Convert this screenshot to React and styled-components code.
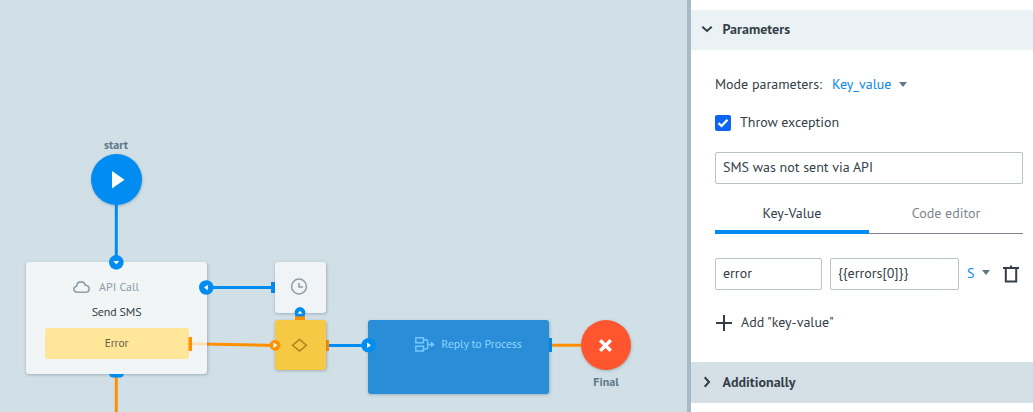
import React from "react";
import styled, { createGlobalStyle } from "styled-components";

const Global = createGlobalStyle`
  * { box-sizing: border-box; }
  body { margin: 0; overflow: hidden; font-family: "PT Sans", "Open Sans", "Noto Sans", sans-serif; font-stretch: 87%; color: #353e48; }
`;
const blue = "#008cf0";
const orange = "#ff9100";

const Layout = styled.div`display: flex; width: 1033px; height: 412px; overflow: hidden;`;
const Canvas = styled.main`position: relative; width: 687px; flex: none; background: #d1dfe6; overflow: hidden;`;
const Layer = styled.svg`position: absolute; inset: 0; pointer-events: none; display: block;`;
const Node = styled.div`
  position: absolute;
  left: ${p => p.$x}px;
  top: ${p => p.$y}px;
  width: ${p => p.$w}px;
  height: ${p => p.$h}px;
  background: ${p => p.$bg};
  border-radius: ${p => (p.$round ? "50%" : "3px")};
  box-shadow: 0.5px 1px 3px rgba(60, 85, 100, 0.32);
`;
const CardBody = styled.div`display: flex; flex-direction: column; align-items: center; padding: 15px 18px 0;`;
const CardTitle = styled.div`
  display: flex; align-items: center; height: 20px; gap: ${p => p.$gap}px;
  padding-left: ${p => p.$indent || 0}px; padding-right: ${p => p.$outdent || 0}px;
`;
const Label = styled.span`
  font-size: ${p => p.$size || 14}px;
  font-weight: ${p => p.$weight || 400};
  letter-spacing: ${p => p.$track || 0}px;
  color: ${p => p.$color || "inherit"};
  line-height: 20px;
  white-space: nowrap;
`;
const ErrorBar = styled.div`
  display: flex; align-items: center; justify-content: center;
  width: 144px; height: 31px; margin-top: 6px; padding-bottom: 1px; border-radius: 3px; background: #ffe699;
`;
const Caption = styled.div`
  position: absolute; left: ${p => p.$x}px; top: ${p => p.$y}px; width: 60px;
  display: flex; justify-content: center;
`;

const Panel = styled.aside`flex: 1; min-width: 0; border-left: 4px solid #a8bac5; background: #fff; padding-top: 10px;`;
const SectionHeader = styled.header`
  display: flex; align-items: center; gap: 9.5px; height: ${p => p.$h}px; padding: 0 0 ${p => p.$lift}px 10px; background: ${p => p.$bg};
`;
const Body = styled.section`height: 312px; padding: 24px 10px 0 24px;`;
const Row = styled.div`display: flex; align-items: center; height: ${p => p.$h}px; margin-top: ${p => p.$top || 0}px;`;
const ModeSelect = styled.div`display: flex; align-items: center; margin-left: 10px;`;
const TypeSelect = styled.div`display: flex; align-items: center; padding-bottom: 3px;`;
const Lifted = styled.div`display: flex; padding-bottom: 2px;`;
const Caret = styled.span`
  width: 0; height: 0; margin-left: ${p => p.$gap}px;
  border: 4.5px solid transparent; border-top: 5px solid #5d7889; border-bottom: 0;
`;
const Checkbox = styled.span`
  display: flex; width: 16px; height: 16px; margin-right: 9px; border-radius: 2px; background: #0b66f6;
`;
const Field = styled.div`
  display: flex; align-items: center; width: ${p => p.$w}px; height: 32px; padding: 0 7px 2px;
  margin-right: ${p => p.$gap || 0}px;
  border: 1px solid #b9c4ca; border-radius: 2px; background: #fff;
`;
const Tabs = styled.div`display: flex; height: 40px; margin-top: 10px; align-items: flex-end;`;
const Tab = styled.div`
  display: flex; justify-content: center; width: 154px; height: 40px; padding-top: 9px;
  border-bottom: ${p => (p.$active ? `4px solid ${blue}` : "1px solid #7c858e")};
`;
const TrashIcon = styled.svg`display: block; margin-left: 12px;`;

const ports = { down: "M-2.8 -1.5H2.8L0 2.2Z", left: "M1.5 -2.8V2.8L-2.2 0Z", right: "M-1.5 -2.8V2.8L2.4 0Z", up: "M-2.5 1.3H2.5L0 -1.8Z" };
const Port = ({ x, y, r, dir, color = blue }) => (
  <g transform={`translate(${x} ${y})`}>
    <circle r={r} fill={color} />
    <path d={ports[dir]} fill="#fff" />
  </g>
);

export default function App() {
  return (
    <>
      <Global />
      <Layout>
        <Canvas>
          <Layer width="687" height="412" fill="none" strokeWidth="3">
            <path d="M116.3 200V262M206 287.5H275M326 345.5H368" stroke={blue} />
            <path d="M116.3 374V412M189 343.7L275 345.5M548 345.2H584" stroke={orange} />
            <path d="M271 282h5v11h-5zM547.5 338h4.5v14h-4.5z" fill={blue} />
            <path d="M325 340h4v11h-4zM295 315h10v8h-10z" fill={orange} />
          </Layer>

          <Caption $x={86} $y={135}><Label $size={12} $weight={700} $color="#607889">start</Label></Caption>
          <Node $x={91} $y={154} $w={51} $h={51} $bg={blue} $round />
          <Node $x={26} $y={262} $w={181} $h={112} $bg="#f1f5f6">
            <CardBody>
              <CardTitle $gap={9} $outdent={21}>
                <svg width="17" height="13" viewBox="0 0 17 13" fill="none" stroke="#8d9daa" strokeWidth="1.6">
                  <path d="M4.3 11.3C2.3 11.3 .9 10 .9 8.3C.9 6.7 2.1 5.5 3.6 5.3C3.8 2.6 5.5 .9 8 .9C10.2 .9 11.8 2.2 12.3 4.2C14.6 4.3 16.1 5.7 16.1 7.7C16.1 9.9 14.6 11.3 12.4 11.3Z" />
                </svg>
                <Label $size={12} $color="#8d9daa">API Call</Label>
              </CardTitle>
              <Row $h={20} $top={5}><Label $size={12} $track={-0.15}>Send SMS</Label></Row>
              <ErrorBar><Label $size={11.5} $track={-0.1} $color="#665c43">Error</Label></ErrorBar>
            </CardBody>
          </Node>
          <Node $x={275} $y={262} $w={51} $h={51} $bg="#f0f4f6" />
          <Node $x={275} $y={320} $w={51} $h={50} $bg="#f6c945" />
          <Node $x={368} $y={320} $w={181} $h={74} $bg="#298dd7">
            <CardBody>
              <Row $h={18}>
                <CardTitle $gap={6} $indent={20}>
                  <svg width="20" height="15" viewBox="0 0 20 15" fill="none" stroke="#75c8ff" strokeWidth="1.5">
                    <path d="M.8 .8h7.6v4.9H.8zM.8 9.2h7.6v4.9H.8zM8.5 2.8h2.8q1.4 0 1.4 1.4v6.4q0 1.4-1.4 1.4H8.5M12.7 7.5h4" />
                    <path d="M15.8 4.5L19.8 7.5L15.8 10.5Z" fill="#75c8ff" stroke="none" />
                  </svg>
                  <Label $size={12} $track={-0.15} $color="#8ed2ff">Reply to Process</Label>
                </CardTitle>
              </Row>
            </CardBody>
          </Node>
          <Node $x={581} $y={320} $w={50} $h={50} $bg="#ff5630" $round />
          <Caption $x={576} $y={372}><Label $size={12} $weight={700} $color="#607889">Final</Label></Caption>

          <Layer width="687" height="412" fill="none">
            <path d="M112 171V188.5L124.5 179.8Z" fill="#fff" />
            <path d="M192 343.8L206.5 344.1" stroke="#ffe0bd" strokeWidth="3" />
            <path d="M188.5 337h3.5v14h-3.5z" fill={orange} />
            <path d="M109 374h15q-1 3.5-4 3.5h-7q-3 0-4-3.5z" fill={blue} />
            <circle cx="299" cy="286.5" r="7.4" stroke="#8d9daa" strokeWidth="1.5" />
            <path d="M299 283V287H303" stroke="#8d9daa" strokeWidth="1.6" />
            <path d="M299.5 339.4L306.4 345.2L299.5 351L292.6 345.2Z" stroke="#ad8318" strokeWidth="1.5" />
            <path d="M600.2 340.2L610.8 350.8M610.8 340.2L600.2 350.8" stroke="#fff" strokeWidth="3.4" />
            <Port x={116.3} y={262.4} r={7.3} dir="down" />
            <Port x={206.3} y={287.5} r={7.3} dir="left" />
            <Port x={368.6} y={345.3} r={7.3} dir="right" />
            <Port x={300} y={312.5} r={5.4} dir="up" />
            <path d="M295 320v-2.5l1-1h8l1 1v2.5z" fill={orange} />
            <Port x={275} y={345.3} r={5.4} dir="right" color={orange} />
          </Layer>
        </Canvas>

        <Panel>
          <SectionHeader $bg="#ebf2f6" $h={40} $lift={2}>
            <svg width="12" height="12" viewBox="0 0 12 12" fill="none" stroke="#353e48" strokeWidth="2"><path d="M1.3 3.7L6 8L10.7 3.7" /></svg>
            <Label $weight={700}>Parameters</Label>
          </SectionHeader>
          <Body>
            <Row $h={20}>
              <Label>Mode parameters:</Label>
              <ModeSelect>
                <Label $color="#0b87ee">Key_value</Label>
                <Caret $gap={8} />
              </ModeSelect>
            </Row>
            <Row $h={20} $top={19}>
              <Checkbox>
                <svg width="16" height="16" fill="none" stroke="#fff" strokeWidth="2.3"><path d="M3.5 8.2L6.6 11L12.5 4.8" /></svg>
              </Checkbox>
              <Lifted><Label>Throw exception</Label></Lifted>
            </Row>
            <Row $h={32} $top={19}><Field $w={308}><Label>SMS was not sent via API</Label></Field></Row>
            <Tabs>
              <Tab $active><Label>Key-Value</Label></Tab>
              <Tab><Label $color="#7e858c">Code editor</Label></Tab>
            </Tabs>
            <Row $h={32} $top={24}>
              <Field $w={107} $gap={8}><Label>error</Label></Field>
              <Field $w={129} $gap={8}><Label>{"{{errors[0]}}"}</Label></Field>
              <TypeSelect>
                <Label $color="#0b87ee">S</Label>
                <Caret $gap={8} />
              </TypeSelect>
              <TrashIcon width="18" height="20" fill="none" stroke="#353e48" strokeWidth="2">
                <path d="M1 4H17M9 1.5V4M3.8 4V17.5H14.2V4" />
              </TrashIcon>
            </Row>
            <Row $h={20} $top={23}>
              <svg width="26" height="18" fill="none" stroke="#353e48" strokeWidth="2"><path d="M1 9H17M9 1V17" /></svg>
              <Lifted><Label>Add "key-value"</Label></Lifted>
            </Row>
          </Body>
          <SectionHeader $bg="#d5e0e6" $h={41} $lift={1}>
            <svg width="12" height="12" viewBox="0 0 12 12" fill="none" stroke="#353e48" strokeWidth="2"><path d="M3.7 1.3L8 6L3.7 10.7" /></svg>
            <Label $weight={700}>Additionally</Label>
          </SectionHeader>
        </Panel>
      </Layout>
    </>
  );
}
